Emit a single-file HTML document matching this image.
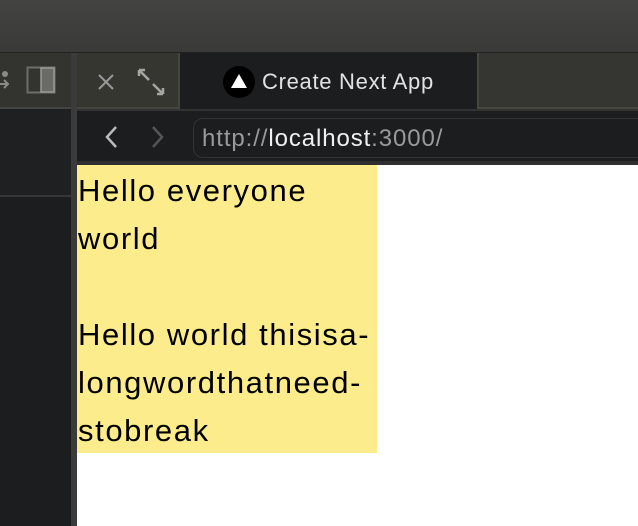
<!DOCTYPE html>
<html><head><style>
*{margin:0;padding:0;box-sizing:border-box}
body{width:638px;height:526px;overflow:hidden;background:#1c1d1f;position:relative;font-family:"Liberation Sans",sans-serif}
div{position:absolute}
</style></head><body>
<div style="left:0;top:0;width:638px;height:52px;background:linear-gradient(#434341,#3a3a38)"></div>
<div style="left:0;top:52px;width:638px;height:1px;background:#222"></div>
<div style="left:0;top:53px;width:71px;height:54px;background:#33332f"></div>
<div style="left:0;top:107px;width:71px;height:2px;background:#444442"></div>
<div style="left:0;top:109px;width:71px;height:86px;background:#1f2022"></div>
<div style="left:0;top:195px;width:71px;height:2px;background:#353535"></div>
<div style="left:71px;top:53px;width:6px;height:473px;background:#3b3b3b"></div>
<svg style="position:absolute;left:0;top:60px" width="71" height="40">
<circle cx="5" cy="14" r="3" fill="#8a8a88"/>
<path d="M0 24h7M4 20l4 4-4 4" stroke="#8a8a88" stroke-width="2" fill="none"/>
<rect x="27.5" y="7.5" width="27" height="25" fill="none" stroke="#6d6d6a" stroke-width="2"/>
<rect x="41" y="8" width="13" height="24" fill="#6a6a66" stroke="#9a9a98" stroke-width="1.5"/>
</svg>
<div style="left:77px;top:53px;width:103px;height:56px;background:#363631;border-right:2px solid #45453f;border-bottom:2px solid #45453f"></div>
<svg style="position:absolute;left:77px;top:53px" width="103" height="56">
<path d="M22 22l14 14M36 22l-14 14" stroke="#999" stroke-width="2"/>
<path d="M62 17l10 10M62 17v6M62 17h6M86 41l-10-10M86 41v-6M86 41h-6" stroke="#a5a5a2" stroke-width="2.5" fill="none"/>
</svg>
<div style="left:180px;top:53px;width:297px;height:56px;background:#1c1d1f"></div>
<div style="left:477px;top:53px;width:161px;height:56px;background:#353531;border-left:2px solid #47473f;border-bottom:2px solid #47473f"></div>
<svg style="position:absolute;left:223px;top:66px" width="32" height="32"><circle cx="16" cy="16" r="16" fill="#000"/><path d="M16 8l8 14H8z" fill="#fff"/></svg>
<div style="left:262px;top:69px;color:#e2e2e2;font-size:22px;letter-spacing:0.7px">Create Next App</div>
<div style="left:77px;top:109px;width:561px;height:2px;background:#333"></div>
<div style="left:77px;top:161px;width:561px;height:4px;background:#2f2f2f"></div>
<svg style="position:absolute;left:77px;top:111px" width="120" height="50">
<path d="M39 16l-9 10 9 10" stroke="#bbb" stroke-width="2.5" fill="none"/>
<path d="M76 16l9 10-9 10" stroke="#555" stroke-width="2.5" fill="none"/>
</svg>
<div style="left:193px;top:118px;width:460px;height:40px;border:1.5px solid #333;border-radius:10px;background:#1c1d1f"></div>
<div style="left:202px;top:125px;font-size:24px;letter-spacing:0.9px;color:#9a9a9a;white-space:nowrap">http://<span style="color:#f0f0f0">localhost</span>:3000/</div>
<div style="left:77px;top:165px;width:561px;height:361px;background:#fff"></div>
<div style="left:77px;top:165px;width:300px;height:288px;background:#fdec8b;color:#000;font-size:31px;letter-spacing:1.6px;line-height:48px;padding-left:1px;padding-top:2px;white-space:nowrap;overflow:hidden">Hello everyone<br>world<br><br>Hello world thisisa-<br>longwordthatneed-<br>stobreak</div>
</body></html>
